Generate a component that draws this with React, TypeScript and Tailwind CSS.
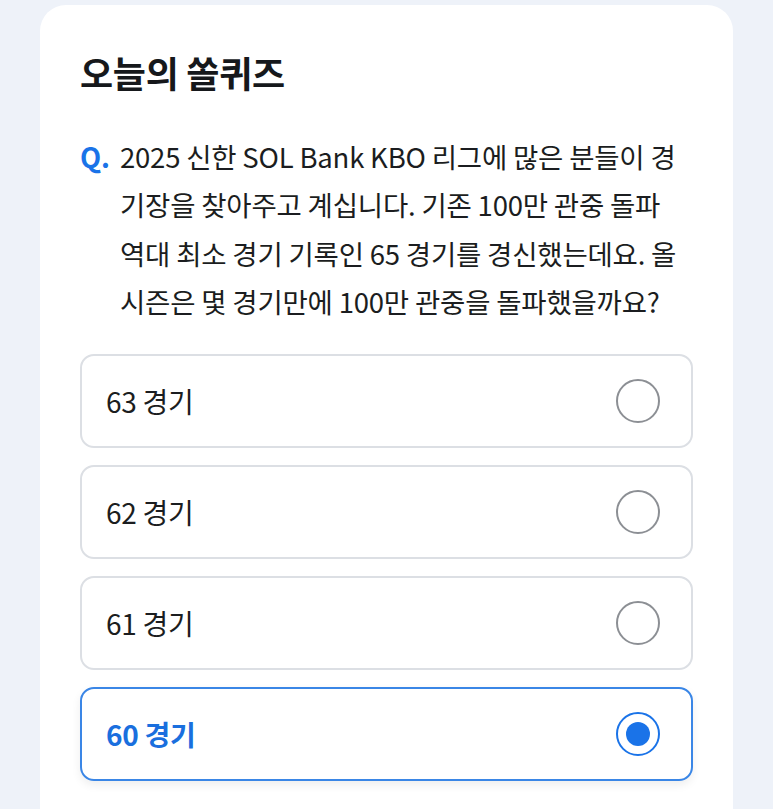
import React from "react";

const options = ["63 경기", "62 경기", "61 경기", "60 경기"];
const selected = 3;

export default function App() {
  return (
    <div
      className="w-[773px] h-[809px] overflow-hidden bg-[#eef2f9] pt-[5px] pl-[40px]"
      style={{ fontFamily: '"Noto Sans CJK KR", "Noto Sans", sans-serif' }}
    >
      <div className="w-[693px] h-[900px] bg-white rounded-[26px] pt-[45px] px-[40px]">
        <h1 className="text-[36px] leading-[44px] font-bold text-[#16181b] tracking-[-0.3px]">
          오늘의 쏠퀴즈
        </h1>
        <div className="mt-[38px] flex text-[27.5px] leading-[48.3px] text-[#1b1d20] tracking-[-0.2px]">
          <span className="w-[40px] shrink-0 font-bold text-[#1a73e8]">Q.</span>
          <div className="flex-1 whitespace-nowrap">
            <div>2025 신한 SOL Bank KBO 리그에 많은 분들이 경</div>
            <div>기장을 찾아주고 계십니다. 기존 100만 관중 돌파</div>
            <div>역대 최소 경기 기록인 65 경기를 경신했는데요. 올</div>
            <div>시즌은 몇 경기만에 100만 관중을 돌파했을까요?</div>
          </div>
        </div>
        <div className="mt-[29px] flex flex-col gap-[17px]">
          {options.map((o, i) => {
            const sel = i === selected;
            return (
              <div
                key={o}
                className={
                  sel
                    ? "h-[94px] rounded-[14px] border-2 border-[#3a86e6] shadow-[0_4px_10px_rgba(0,0,0,0.07)] flex items-center justify-between pl-[24px] pr-[31px]"
                    : "h-[94px] rounded-[14px] border-2 border-[#dcdfe4] flex items-center justify-between pl-[24px] pr-[31px]"
                }
              >
                <span
                  className={
                    sel
                      ? "text-[28px] font-semibold text-[#1a6fde] tracking-[-0.3px]"
                      : "text-[28px] text-[#1b1d20] tracking-[-0.3px]"
                  }
                >
                  {o}
                </span>
                {sel ? (
                  <span className="w-[44px] h-[44px] rounded-full border-[2.5px] border-[#1a73e8] flex items-center justify-center">
                    <span className="w-[24px] h-[24px] rounded-full bg-[#1a73e8]" />
                  </span>
                ) : (
                  <span className="w-[44px] h-[44px] rounded-full border-[2.5px] border-[#8c8f94]" />
                )}
              </div>
            );
          })}
        </div>
      </div>
    </div>
  );
}
